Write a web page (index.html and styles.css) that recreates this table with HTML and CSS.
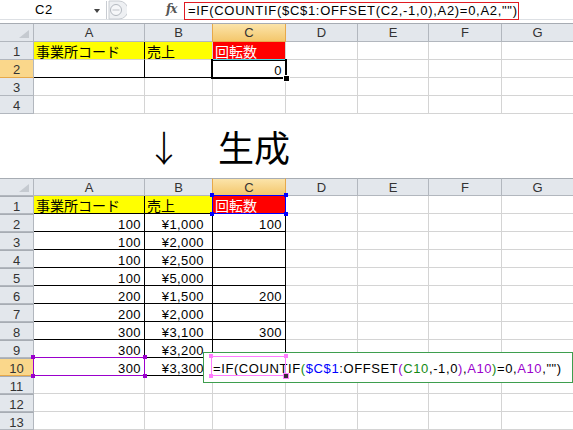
FILE: index.html
```html
<!DOCTYPE html>
<html lang="ja">
<head>
<meta charset="utf-8">
<title>Excel</title>
<link rel="stylesheet" href="styles.css">
</head>
<body>
<div class="app">
  <div class="toolbar">
    <div class="namebox"><span class="nb-text">C2</span><span class="nb-arrow"></span></div>
    <svg class="grip" width="22" height="20" viewBox="0 0 22 20">
      <line x1="1.5" y1="1" x2="1.5" y2="19" stroke="#C8CCD2"/>
      <path d="M4 1 H14 A9 9 0 0 1 14 19 H4 Z" fill="#EEF0F3" stroke="#C8CCD2"/>
      <circle cx="11" cy="10" r="5.5" fill="#F6F7F9" stroke="#B4B9C0"/>
      <rect x="7.5" y="9.5" width="7" height="1" fill="#C0C4CA"/>
    </svg>
    <span class="fx">fx</span>
    <div class="formula">=IF(COUNTIF($C$1:OFFSET(C2,-1,0),A2)=0,A2,"")</div>
  </div>
  <div class="sep"></div>

  <div class="sheet sheet-top">
    <div class="grid">
      <div class="c h corner"><svg width="10" height="8" viewBox="0 0 10 8"><polygon points="10,0 10,8 0,8" fill="#C5CAD0"/></svg></div>
      <div class="c h">A</div>
      <div class="c h">B</div>
      <div class="c h selc">C</div>
      <div class="c h">D</div>
      <div class="c h">E</div>
      <div class="c h">F</div>
      <div class="c h">G</div>

      <div class="c h r">1</div>
      <div class="c yel brk"><span class="jp">事業所コード</span></div>
      <div class="c yel"><span class="jp">売上</span></div>
      <div class="c red"><span class="jp">回転数</span></div>
      <div class="c"></div><div class="c"></div><div class="c"></div><div class="c"></div>

      <div class="c h r selr">2</div>
      <div class="c brk bbk"></div>
      <div class="c bbk"></div>
      <div class="c n bbk brk rel">0<i class="active"></i><i class="cyan"></i><i class="fill"></i></div>
      <div class="c"></div><div class="c"></div><div class="c"></div><div class="c"></div>

      <div class="c h r">3</div>
      <div class="c"></div><div class="c"></div><div class="c"></div><div class="c"></div><div class="c"></div><div class="c"></div><div class="c"></div>

      <div class="c h r">4</div>
      <div class="c"></div><div class="c"></div><div class="c"></div><div class="c"></div><div class="c"></div><div class="c"></div><div class="c"></div>
    </div>
  </div>

  <div class="gen"><span class="arrow">↓</span>　<span>生成</span></div>

  <div class="sheet sheet-bottom">
    <div class="grid">
      <div class="c h corner"><svg width="10" height="8" viewBox="0 0 10 8"><polygon points="10,0 10,8 0,8" fill="#C5CAD0"/></svg></div>
      <div class="c h">A</div>
      <div class="c h">B</div>
      <div class="c h selc">C</div>
      <div class="c h">D</div>
      <div class="c h">E</div>
      <div class="c h">F</div>
      <div class="c h">G</div>

      <div class="c h r">1</div>
      <div class="c yel brk bbk"><span class="jp">事業所コード</span></div>
      <div class="c yel brk bbk"><span class="jp">売上</span></div>
      <div class="c red brk bbk rel"><span class="jp">回転数</span><i class="rf rf-blue"><b class="k tl"></b><b class="k tr"></b><b class="k bl"></b><b class="k br"></b></i></div>
      <div class="c"></div><div class="c"></div><div class="c"></div><div class="c"></div>

      <div class="c h r">2</div>
      <div class="c n brk bbk">100</div>
      <div class="c n yen brk bbk">¥1,000</div>
      <div class="c n brk bbk">100</div>
      <div class="c"></div><div class="c"></div><div class="c"></div><div class="c"></div>

      <div class="c h r">3</div>
      <div class="c n brk bbk">100</div>
      <div class="c n yen brk bbk">¥2,000</div>
      <div class="c n brk bbk"></div>
      <div class="c"></div><div class="c"></div><div class="c"></div><div class="c"></div>

      <div class="c h r">4</div>
      <div class="c n brk bbk">100</div>
      <div class="c n yen brk bbk">¥2,500</div>
      <div class="c n brk bbk"></div>
      <div class="c"></div><div class="c"></div><div class="c"></div><div class="c"></div>

      <div class="c h r">5</div>
      <div class="c n brk bbk">100</div>
      <div class="c n yen brk bbk">¥5,000</div>
      <div class="c n brk bbk"></div>
      <div class="c"></div><div class="c"></div><div class="c"></div><div class="c"></div>

      <div class="c h r">6</div>
      <div class="c n brk bbk">200</div>
      <div class="c n yen brk bbk">¥1,500</div>
      <div class="c n brk bbk">200</div>
      <div class="c"></div><div class="c"></div><div class="c"></div><div class="c"></div>

      <div class="c h r">7</div>
      <div class="c n brk bbk">200</div>
      <div class="c n yen brk bbk">¥2,000</div>
      <div class="c n brk bbk"></div>
      <div class="c"></div><div class="c"></div><div class="c"></div><div class="c"></div>

      <div class="c h r">8</div>
      <div class="c n brk bbk">300</div>
      <div class="c n yen brk bbk">¥3,100</div>
      <div class="c n brk bbk">300</div>
      <div class="c"></div><div class="c"></div><div class="c"></div><div class="c"></div>

      <div class="c h r">9</div>
      <div class="c n brk bbk">300</div>
      <div class="c n yen brk bbk">¥3,200</div>
      <div class="c n brk bbk"></div>
      <div class="c"></div><div class="c"></div><div class="c"></div><div class="c"></div>

      <div class="c h r selr">10</div>
      <div class="c n brk bbk rel">300<i class="rf rf-purple"><b class="k tl"></b><b class="k tr"></b><b class="k bl"></b><b class="k br"></b></i></div>
      <div class="c n yen brk bbk">¥3,300</div>
      <div class="c n brk bbk"></div>
      <div class="c"></div><div class="c"></div><div class="c"></div><div class="c"></div>

      <div class="c h r">11</div>
      <div class="c"></div><div class="c"></div><div class="c"></div><div class="c"></div><div class="c"></div><div class="c"></div><div class="c"></div>

      <div class="c h r">12</div>
      <div class="c"></div><div class="c"></div><div class="c"></div><div class="c"></div><div class="c"></div><div class="c"></div><div class="c"></div>

      <div class="c h r">13</div>
      <div class="c"></div><div class="c"></div><div class="c"></div><div class="c"></div><div class="c"></div><div class="c"></div><div class="c"></div>
    </div>

    <div class="editbox">=IF(COUNTIF<span class="g">(</span><span class="b">$C$1</span>:OFFSET<span class="p">(</span><span class="g">C10</span>,-1,0<span class="p">)</span>,<span class="p">A10</span><span class="g">)</span>=0,<span class="p">A10</span>,"")</div>
    <div class="rf rf-pink"><b class="k tl"></b><b class="k tr"></b><b class="k bl"></b><b class="k br"></b></div>
  </div>
</div>
</body>
</html>
```

FILE: styles.css
```css
html, body {
  margin: 0;
  padding: 0;
  background: #FFFFFF;
}

body {
  font-family: "Liberation Sans", "Noto Sans CJK JP", sans-serif;
  font-size: 13px;
  color: #000;
}

.app {
  width: 573px;
  height: 430px;
  overflow: hidden;
}

/* ---------- formula bar ---------- */
.toolbar {
  height: 19px;
  border-bottom: 1px solid #DDE0E4;
  display: flex;
  align-items: stretch;
}

.namebox {
  width: 105px;
  display: flex;
  align-items: center;
  position: relative;
}

.nb-text {
  padding-left: 35px;
  line-height: 19px;
  letter-spacing: 0.6px;
}

.nb-arrow {
  position: absolute;
  left: 94px;
  top: 9px;
  width: 0;
  height: 0;
  border-left: 3.5px solid transparent;
  border-right: 3.5px solid transparent;
  border-top: 4px solid #444;
}

.grip {
  display: block;
  margin-top: 0;
}

.fx {
  width: 57px;
  font-family: "DejaVu Serif", "Liberation Serif", serif;
  font-style: italic;
  font-weight: bold;
  font-size: 12px;
  color: #555;
  line-height: 19px;
  padding-left: 39px;
  box-sizing: border-box;
  letter-spacing: -1px;
}

.formula {
  margin-top: 2px;
  width: 335px;
  height: 18px;
  box-sizing: border-box;
  border: 1px solid #E01B22;
  padding-left: 3px;
  line-height: 15px;
  letter-spacing: 0.7px;
  white-space: nowrap;
}

.sep {
  height: 3px;
  border-bottom: 1px solid #A7ACB3;
}

/* ---------- sheets ---------- */
.sheet {
  position: relative;
}

.sheet-bottom .h {
  border-top: 1px solid #A7ACB3;
}

.grid {
  display: grid;
  grid-template-columns: 34px 111px 68px 73px 72px 71px 73px 72px;
  grid-auto-rows: 18px;
}

.c {
  box-sizing: border-box;
  border-right: 1px solid #D4D4D4;
  border-bottom: 1px solid #D4D4D4;
  padding: 5px 3px 0 2px;
  line-height: 12px;
  white-space: nowrap;
  overflow: hidden;
}

.n {
  text-align: right;
  letter-spacing: 0.4px;
}

.yen {
  padding-right: 8px;
}

.h {
  background: #E3E7EC;
  border-right-color: #B2B7BE;
  border-bottom-color: #B2B7BE;
  text-align: center;
  padding: 0;
  line-height: 17px;
  color: #333;
}

.r {
  line-height: 19px;
}

.corner {
  display: flex;
  justify-content: flex-end;
  align-items: flex-end;
  padding: 0 4px 3px 0;
}

.corner svg {
  display: block;
}

.selc {
  background: linear-gradient(#FBE4AA, #F4C76C);
  border-right-color: #E7A94A;
  border-bottom-color: #E7A94A;
  border-left: 1px solid #E7A94A;
  margin-left: -1px;
}

.selr {
  background: #FAD78B;
  border-bottom-color: #E7A94A;
}

.yel {
  background: #FFFF00;
}

.red {
  background: #FF0000;
  color: #FFFFFF;
}

.jp {
  font-family: "Noto Sans CJK JP", sans-serif;
  font-size: 14px;
  position: relative;
  top: -2px;
}

.brk {
  border-right-color: #000;
}

.bbk {
  border-bottom-color: #000;
}

.rel {
  position: relative;
  overflow: visible;
}

/* active cell (top sheet) */
.active {
  position: absolute;
  left: -2px;
  top: -1px;
  right: -2px;
  bottom: -2px;
  border: 2px solid #000;
  box-shadow: inset 0 0 0 1px #FFFFFF;
}

.cyan {
  position: absolute;
  left: 0;
  right: 0;
  top: -1px;
  height: 1px;
  background: #46D6E6;
}

.fill {
  position: absolute;
  right: -4px;
  bottom: -4px;
  width: 5px;
  height: 5px;
  background: #000;
  box-shadow: 0 0 0 1px #FFFFFF;
}

/* range finder boxes */
.rf {
  position: absolute;
  box-sizing: border-box;
  border: 1px solid;
  pointer-events: none;
}

.rf-blue {
  left: -1px;
  top: -1px;
  right: -1px;
  bottom: -1px;
  border-color: #0000FF;
  color: #0000FF;
}

.rf-purple {
  left: -1px;
  top: -1px;
  right: -1px;
  bottom: -1px;
  border-color: #9A00CC;
  color: #9A00CC;
}

.rf-pink {
  left: 211px;
  top: 178px;
  width: 75px;
  height: 20px;
  border-color: #FF7CFF;
  color: #FF7CFF;
}

.k {
  position: absolute;
  width: 4px;
  height: 4px;
  background: currentColor;
}

.k.tl { left: -3px; top: -3px; }
.k.tr { right: -3px; top: -3px; }
.k.bl { left: -3px; bottom: -3px; }
.k.br { right: -3px; bottom: -3px; }

.rf-pink .k.br {
  background: #3A2A3A;
  box-shadow: 0 0 0 1px #FF7CFF;
}

/* editing box */
.editbox {
  position: absolute;
  left: 203px;
  top: 174px;
  width: 370px;
  height: 31px;
  box-sizing: border-box;
  border: 1px solid #3E9E4E;
  background: #FFFFFF;
  padding: 9px 0 0 9px;
  line-height: 13px;
  letter-spacing: 0.6px;
  white-space: nowrap;
}

.g { color: #138A13; }
.b { color: #0000FF; }
.p { color: #9A00CC; }

/* generation caption */
.gen {
  height: 64px;
  box-sizing: border-box;
  padding: 14px 0 0 146px;
  font-family: "Noto Sans CJK JP", sans-serif;
  font-size: 36px;
  line-height: 36px;
  white-space: nowrap;
}

.arrow {
  display: inline-block;
  width: 36px;
  text-align: center;
  font-weight: 300;
}
```
